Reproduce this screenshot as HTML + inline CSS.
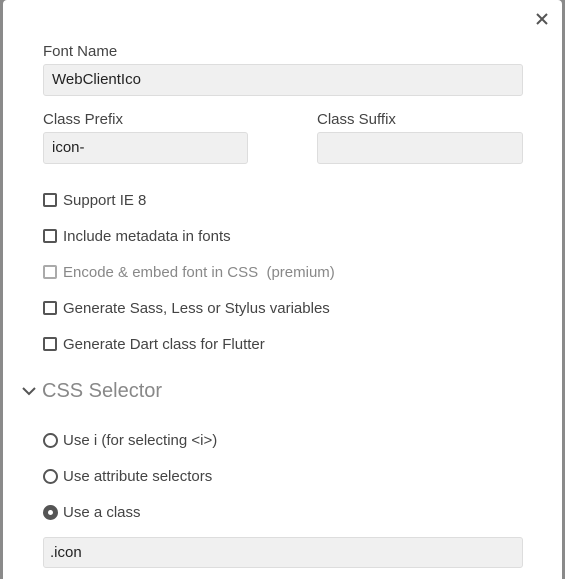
<!DOCTYPE html>
<html><head><style>
body{margin:0;width:565px;height:579px;background:#8a8a8a;position:relative;overflow:hidden;font-family:"Liberation Sans",sans-serif;}
.dlg{position:absolute;left:3px;top:0;width:559px;height:579px;background:#fff;border-radius:4px 4px 0 0;}
.t{position:absolute;font-size:15px;color:#444;white-space:nowrap;line-height:18px}
.in{position:absolute;background:#f0f0f0;border:1px solid #ddd;border-radius:3px;box-sizing:border-box;font-size:15px;color:#222;padding-left:8px;line-height:29px}
.cb{position:absolute;left:43px;width:14px;height:14px;border:2px solid #555;border-radius:2px;box-sizing:border-box}
.rb{position:absolute;left:43px;width:15px;height:15px;border:2px solid #555;border-radius:50%;box-sizing:border-box}
</style></head><body>
<div class="dlg"></div>
<svg style="position:absolute;left:536px;top:13px" width="12" height="12"><path d="M1 1L11 11M11 1L1 11" stroke="#555" stroke-width="2"/></svg>
<div class="t" style="left:43px;top:43px">Font Name</div>
<div class="in" style="left:43px;top:64px;width:480px;height:32px">WebClientIco</div>
<div class="t" style="left:43px;top:111px">Class Prefix</div>
<div class="in" style="left:43px;top:132px;width:205px;height:32px">icon-</div>
<div class="t" style="left:317px;top:111px">Class Suffix</div>
<div class="in" style="left:317px;top:132px;width:206px;height:32px"></div>
<div class="cb" style="top:193px"></div><div class="t" style="left:63px;top:192px">Support IE 8</div>
<div class="cb" style="top:229px"></div><div class="t" style="left:63px;top:228px">Include metadata in fonts</div>
<div class="cb" style="top:265px;border-color:#aaa"></div><div class="t" style="left:63px;top:264px;color:#888">Encode &amp; embed font in CSS&nbsp; (premium)</div>
<div class="cb" style="top:301px"></div><div class="t" style="left:63px;top:300px">Generate Sass, Less or Stylus variables</div>
<div class="cb" style="top:337px"></div><div class="t" style="left:63px;top:336px">Generate Dart class for Flutter</div>
<svg style="position:absolute;left:22px;top:386px" width="14" height="10"><path d="M1 2L7 8L13 2" stroke="#555" stroke-width="2" fill="none"/></svg>
<div class="t" style="left:42px;top:379px;font-size:20px;line-height:24px;color:#888">CSS Selector</div>
<div class="rb" style="top:433px"></div><div class="t" style="left:63px;top:432px">Use i (for selecting &lt;i&gt;)</div>
<div class="rb" style="top:469px"></div><div class="t" style="left:63px;top:468px">Use attribute selectors</div>
<div class="rb" style="top:505px;background:#555"></div><div style="position:absolute;left:48px;top:510px;width:5px;height:5px;border-radius:50%;background:#fff"></div><div class="t" style="left:63px;top:504px">Use a class</div>
<div class="in" style="left:43px;top:537px;width:480px;height:31px;padding-left:6px">.icon</div>
</body></html>
